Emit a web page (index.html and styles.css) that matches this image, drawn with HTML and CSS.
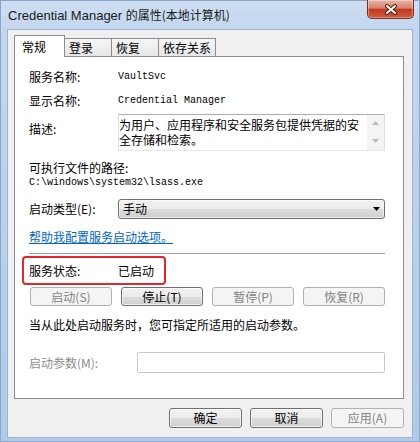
FILE: index.html
```html
<!DOCTYPE html>
<html lang="zh-CN">
<head>
  <meta charset="UTF-8" />
  <title>Credential Manager 的属性(本地计算机)</title>
  <link rel="stylesheet" href="styles.css">
</head>
<body>

  <div class="window">
    <div class="titlebar">
      <span class="title">Credential Manager <span class="title-cjk">的属性(本地计算机)</span></span>
      <div class="close-btn">
        <svg width="14" height="11" viewBox="0 0 14 11">
          <path d="M3 2 L11 9 M11 2 L3 9" stroke="#4a1e16" stroke-width="4" stroke-linecap="round" />
          <path d="M3 2 L11 9 M11 2 L3 9" stroke="#ffffff" stroke-width="2" stroke-linecap="round" />
        </svg>
      </div>
    </div>

    <div class="client">
      <div class="tabs">
        <div class="tab active">常规</div>
        <div class="tab">登录</div>
        <div class="tab">恢复</div>
        <div class="tab">依存关系</div>
      </div>

      <div class="panel">
        <div class="row row-name">
          <span class="label">服务名称:</span>
          <span class="mono">VaultSvc</span>
        </div>
        <div class="row row-display">
          <span class="label">显示名称:</span>
          <span class="mono">Credential Manager</span>
        </div>
        <div class="row row-desc">
          <span class="label desc-label">描述:</span>
          <div class="desc-box">
            <div class="desc-text">为用户、应用程序和安全服务包提供凭据的安全存储和检索。</div>
            <div class="scrollbar">
              <svg width="7" height="4" viewBox="0 0 7 4"><path d="M0 4 L3.5 0 L7 4 Z" fill="#b8b8b8" /></svg>
              <svg width="7" height="4" viewBox="0 0 7 4"><path d="M0 0 L3.5 4 L7 0 Z" fill="#b8b8b8" /></svg>
            </div>
          </div>
        </div>
        <div class="row row-path-label">可执行文件的路径:</div>
        <div class="row row-path mono">C:\windows\system32\lsass.exe</div>
        <div class="row row-type">
          <span class="label">启动类型(E):</span>
          <div class="combo">
            <span>手动</span>
            <svg width="7" height="4" viewBox="0 0 7 4"><path d="M0 0 L7 0 L3.5 4 Z" fill="#000" /></svg>
          </div>
        </div>
        <div class="row row-link"><a class="help-link" href="#">帮助我配置服务启动选项。</a></div>
        <div class="separator"></div>
        <div class="status-box">
          <span class="label">服务状态:</span>
          <span>已启动</span>
        </div>
        <div class="service-buttons">
          <div class="btn disabled">启动(S)</div>
          <div class="btn">停止(T)</div>
          <div class="btn disabled">暂停(P)</div>
          <div class="btn disabled">恢复(R)</div>
        </div>
        <div class="row row-hint">当从此处启动服务时，您可指定所适用的启动参数。</div>
        <div class="row row-params">
          <span class="label params-label">启动参数(M):</span>
          <div class="params-input"></div>
        </div>
      </div>

      <div class="dialog-buttons">
        <div class="btn">确定</div>
        <div class="btn">取消</div>
        <div class="btn disabled">应用(A)</div>
      </div>
    </div>
  </div>

</body>
</html>
```

FILE: styles.css
```css
body {
  margin: 0;
  padding: 0;
  font-family: "Noto Sans CJK SC", sans-serif;
  font-size: 12px;
  color: #000;
  background-color: #bcd2ec;
}

.window {
  width: 420px;
  height: 442px;
  display: flex;
  flex-direction: column;
  background: linear-gradient(180deg, #cfdff3 0, #c2d6ee 30px, #b1cae8 100%);
  box-shadow: inset 0 0 0 1px #8aa6c8;
}

.titlebar {
  height: 30px;
  display: flex;
  align-items: flex-start;
  flex: none;
}

.title {
  padding: 7px 0 0 8px;
  font-family: "Liberation Sans", "Noto Sans CJK SC", sans-serif;
  font-size: 13px;
  line-height: 16px;
  color: #1a1a1a;
}

.title-cjk {
  font-family: "Noto Sans CJK SC", sans-serif;
  font-size: 12px;
}

.close-btn {
  margin-left: auto;
  margin-right: 6px;
  width: 47px;
  height: 19px;
  box-sizing: border-box;
  border: 1px solid #7b2c1f;
  border-top: none;
  border-radius: 0 0 5px 5px;
  background: linear-gradient(180deg, #e9b4a8 0, #d8826c 45%, #c0391f 52%, #cf5a3c 100%);
  box-shadow: inset 0 0 0 1px rgba(255, 255, 255, 0.35);
  display: flex;
  align-items: center;
  justify-content: center;
}

.client {
  flex: 1;
  margin: 0 8px 5px;
  padding: 5px 8px 9px 6px;
  background-color: #f0f0f0;
  box-shadow: 0 0 0 1px #9db4d1;
  display: flex;
  flex-direction: column;
}

.tabs {
  display: flex;
  align-items: flex-end;
  height: 22px;
  margin-bottom: -1px;
  position: relative;
  z-index: 1;
}

.tab {
  box-sizing: border-box;
  min-width: 47px;
  height: 18px;
  margin-bottom: 1px;
  padding: 0 4px;
  line-height: 17px;
  border-top: 1px solid #898c95;
  border-right: 1px solid #898c95;
  background: linear-gradient(180deg, #f6f6f6, #e6e6e6);
}

.tab.active {
  min-width: 51px;
  height: 22px;
  margin-bottom: 0;
  padding-left: 7px;
  line-height: 22px;
  border-left: 1px solid #898c95;
  background: #fff;
}

.panel {
  flex: 1;
  background-color: #fff;
  border: 1px solid #898c95;
  padding: 0 18px 0 14px;
  display: flex;
  flex-direction: column;
}

.row {
  display: flex;
  align-items: center;
  line-height: 14px;
  height: 14px;
}

.label {
  width: 89px;
  flex: none;
}

.mono {
  font-family: "Liberation Mono", monospace;
  font-size: 10px;
}

.row-name { margin-top: 13px; }
.row-display { margin-top: 10px; }

.row-desc {
  margin-top: 6px;
  height: auto;
  align-items: flex-start;
}

.desc-label {
  padding-top: 8px;
}

.desc-box {
  width: 267px;
  height: 37px;
  box-sizing: border-box;
  border: 1px solid;
  border-color: #abadb3 #dbdfe6 #e3e9ef #e2e3ea;
  display: flex;
}

.desc-text {
  flex: 1;
  padding-top: 2px;
  line-height: 15px;
}

.scrollbar {
  width: 17px;
  background-color: #f4f4f4;
  display: flex;
  flex-direction: column;
  justify-content: space-between;
  align-items: center;
  padding: 6px 0 7px;
  box-sizing: border-box;
}

.row-path-label { margin-top: 10px; }
.row-path { margin-top: 1px; }

.row-type {
  margin-top: 9px;
  height: 20px;
}

.combo {
  width: 267px;
  height: 20px;
  box-sizing: border-box;
  border: 1px solid #707070;
  border-radius: 3px;
  background: linear-gradient(180deg, #f2f2f2 0, #ebebeb 50%, #dddddd 50%, #cfcfcf 100%);
  box-shadow: inset 0 0 0 1px rgba(255, 255, 255, 0.6);
  display: flex;
  align-items: center;
  justify-content: space-between;
  padding: 0 4px 0 4px;
}

.row-link { margin-top: 11px; }

.help-link {
  color: #0066cc;
  text-decoration: underline;
}

.separator {
  margin-top: 9px;
  border-top: 1px solid #a0a0a0;
}

.status-box {
  margin: 2px 0 0 -7px;
  width: 144px;
  height: 29px;
  box-sizing: border-box;
  border: 2px solid #e2262a;
  border-radius: 4px;
  padding-left: 5px;
  display: flex;
  align-items: center;
  line-height: 14px;
}

.service-buttons {
  margin-top: 2px;
  padding-left: 1px;
  display: flex;
  justify-content: space-between;
}

.btn {
  width: 82px;
  height: 19px;
  box-sizing: border-box;
  border: 1px solid #707070;
  border-radius: 3px;
  background: linear-gradient(180deg, #f2f2f2 0, #ebebeb 50%, #dddddd 50%, #cfcfcf 100%);
  box-shadow: inset 0 0 0 1px rgba(255, 255, 255, 0.7);
  text-align: center;
  line-height: 17px;
}

.btn.disabled {
  border-color: #adb2b5;
  background: #f4f4f4;
  box-shadow: none;
  color: #838383;
}

.row-hint { margin-top: 12px; }

.row-params {
  margin-top: 20px;
  height: 21px;
}

.params-label {
  width: 108px;
  color: #8d8d8d;
}

.params-input {
  flex: 1;
  height: 21px;
  box-sizing: border-box;
  border: 1px solid #c9c9c9;
  border-radius: 2px;
  background-color: #fff;
}

.dialog-buttons {
  margin-top: 9px;
  display: flex;
  justify-content: flex-end;
  gap: 8px;
}

.dialog-buttons .btn {
  width: 73px;
  height: 20px;
  line-height: 18px;
}
```
